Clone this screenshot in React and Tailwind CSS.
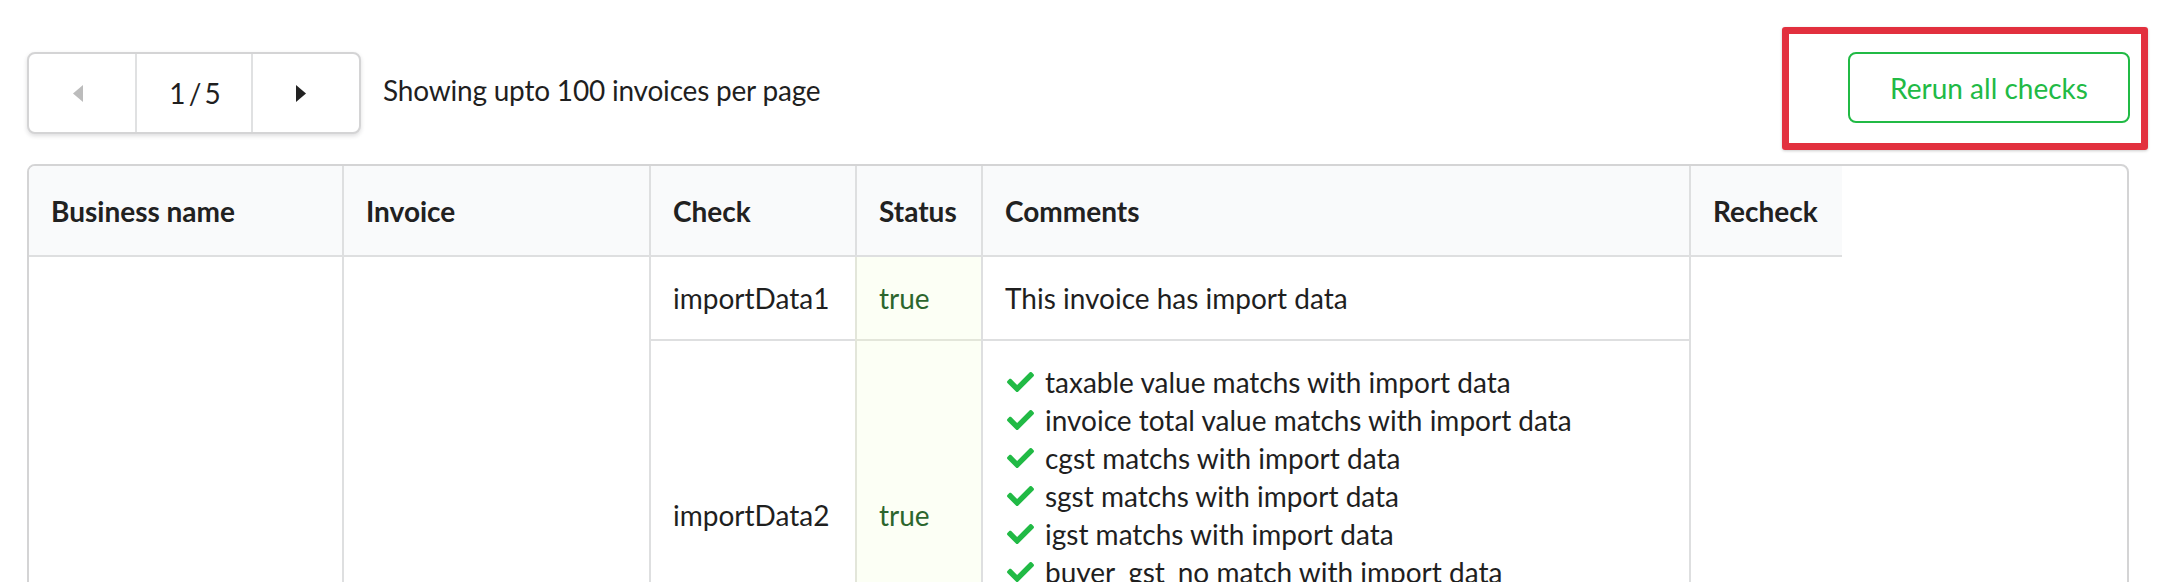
import React from 'react';

const importChecks = [
  'taxable value matchs with import data',
  'invoice total value matchs with import data',
  'cgst matchs with import data',
  'sgst matchs with import data',
  'igst matchs with import data',
  'buyer_gst_no match with import data',
  'seller_gst_no match with import data',
  'invoice date matchs with import data',
];

const CheckIcon = () => (
  <svg viewBox="0 68 512 376" className="w-[27px] h-[20px] fill-[#21ba45]">
    <path d="M173.898 439.404l-166.4-166.4c-9.997-9.997-9.997-26.206 0-36.204l36.203-36.204c9.997-9.998 26.207-9.998 36.204 0L192 312.69 432.095 72.596c9.997-9.997 26.207-9.997 36.204 0l36.203 36.204c9.997 9.997 9.997 26.206 0 36.204l-294.4 294.401c-9.998 9.997-26.207 9.997-36.204-.001z" />
  </svg>
);

const Pagination = () => (
  <div className="flex h-[82px] border-2 border-[#d4d4d5] rounded-[8px] shadow-[0_2px_4px_0_rgba(34,36,38,0.15)] bg-white">
    <div className="w-[106px] flex items-center justify-center pr-[8px]">
      <svg viewBox="0 0 10 17" className="w-[10px] h-[17px] fill-[#bcbcbc]">
        <path d="M10 0 L0 8.5 L10 17 Z" />
      </svg>
    </div>
    <div className="w-[116px] flex items-center justify-center border-l-2 border-[#e0e1e2] tracking-[-2px]">1 / 5</div>
    <div className="w-[108px] flex items-center justify-center border-l-2 border-[#e0e1e2] pr-[10px]">
      <svg viewBox="0 0 10 17" className="w-[10px] h-[17px] fill-[#222]">
        <path d="M0 0 L10 8.5 L0 17 Z" />
      </svg>
    </div>
  </div>
);

export default function App() {
  return (
    <div className="h-screen overflow-hidden bg-white font-['Lato','Liberation_Sans',sans-serif] text-[28px] text-[#1f1f1f] pl-[27px] pr-[10px] pt-[27px]">
      <div className="flex items-start justify-between">
        <div className="mt-[25px] flex items-center">
          <Pagination />
          <span className="ml-[22px] pb-[6px] leading-[40px] tracking-[-0.2px]">Showing upto 100 invoices per page</span>
        </div>
        <div className="border-[7px] border-[#e2303e] rounded-[3px] shadow-[0_1px_3px_rgba(0,0,0,0.2)] pl-[59px] pr-[11px] pt-[18px] pb-[20px]">
          <button className="h-[71px] w-[282px] border-2 border-[#21ba45] rounded-[8px] text-[#21ba45] bg-white leading-none">
            Rerun all checks
          </button>
        </div>
      </div>

      <div className="mt-[14px] w-[2102px] border-2 border-[#d4d4d5] rounded-[8px] overflow-hidden bg-white">
        <table className="table-fixed w-[1813px] border-separate border-spacing-0 text-left">
          <thead>
            <tr className="bg-[#f9fafb] font-bold text-[#212121]">
              <th className="w-[313px] px-[22px] pt-[25px] pb-[24px] leading-[40px] border-b-2 border-[#dedfe0]">Business name</th>
              <th className="w-[307px] px-[22px] pt-[25px] pb-[24px] leading-[40px] border-b-2 border-l-2 border-[#dedfe0]">Invoice</th>
              <th className="w-[206px] px-[22px] pt-[25px] pb-[24px] leading-[40px] border-b-2 border-l-2 border-[#dedfe0]">Check</th>
              <th className="w-[126px] px-[22px] pt-[25px] pb-[24px] leading-[40px] border-b-2 border-l-2 border-[#dedfe0]">Status</th>
              <th className="w-[708px] px-[22px] pt-[25px] pb-[24px] leading-[40px] border-b-2 border-l-2 border-[#dedfe0]">Comments</th>
              <th className="w-[153px] px-[22px] pt-[25px] pb-[24px] leading-[40px] border-b-2 border-l-2 border-[#dedfe0]">Recheck</th>
            </tr>
          </thead>
          <tbody className="align-middle">
            <tr>
              <td rowSpan={2} className="px-[22px]"></td>
              <td rowSpan={2} className="px-[22px] border-l-2 border-[#dedfe0]"></td>
              <td className="px-[22px] py-[21px] leading-[40px] border-l-2 border-[#dedfe0]">importData1</td>
              <td className="px-[22px] py-[21px] leading-[40px] border-l-2 border-[#e3e6da] bg-[#fcfff5] text-[#2c662d]">true</td>
              <td className="px-[22px] py-[21px] leading-[40px] border-l-2 border-[#dedfe0]">This invoice has import data</td>
              <td rowSpan={2} className="px-[22px] border-l-2 border-[#dedfe0]"></td>
            </tr>
            <tr>
              <td className="px-[22px] py-[22px] leading-[40px] border-t-2 border-l-2 border-[#dedfe0]">importData2</td>
              <td className="px-[22px] py-[22px] leading-[40px] border-t-2 border-l-2 border-[#e3e6da] bg-[#fcfff5] text-[#2c662d]">true</td>
              <td className="px-[22px] py-[22px] border-t-2 border-l-2 border-[#dedfe0]">
                {importChecks.map((text) => (
                  <div key={text} className="flex items-center leading-[38px]">
                    <span className="w-[40px] pl-[2px] flex items-center">
                      <CheckIcon />
                    </span>
                    <span>{text}</span>
                  </div>
                ))}
              </td>
            </tr>
          </tbody>
        </table>
      </div>
    </div>
  );
}
